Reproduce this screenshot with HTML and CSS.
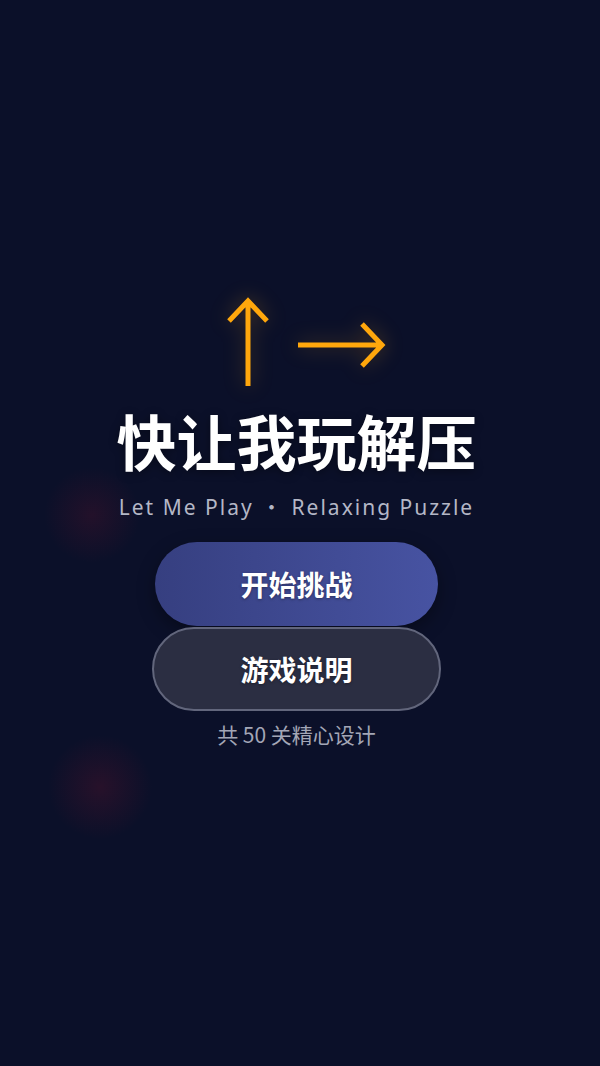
FILE: index.html
```html
<!DOCTYPE html>
<html lang="zh-CN">
  <head>
    <meta charset="utf-8" />
    <meta name="viewport" content="width=device-width, initial-scale=1.0" />
    <link rel="stylesheet" href="styles.css">
  </head>
  <body>
    <main class="menu">
      <div class="logo-arrows">
        <svg class="arrow-up" width="46" height="92" viewBox="0 0 46 92">
          <path d="M23 90 V5 M4 25 L23 5 L42 25" />
        </svg>
        <svg class="arrow-right" width="92" height="50" viewBox="0 0 92 50">
          <path d="M2 25 H86 M66 4 L86 25 L66 46" />
        </svg>
      </div>

      <h1 class="title">快让我玩解压</h1>
      <p class="subtitle">Let Me Play ・ Relaxing Puzzle</p>

      <div class="actions">
        <button class="btn btn-start">开始挑战</button>
        <button class="btn btn-help">游戏说明</button>
      </div>

      <p class="level-count">共 50 关精心设计</p>
    </main>
  </body>
</html>
```

FILE: styles.css
```css
html,
body {
  margin: 0;
  height: 100%;
}
body {
  font-family: "Noto Sans", "Noto Sans CJK SC", sans-serif;
  color: #fff;
  background:
    radial-gradient(circle at 92px 515px, rgba(120, 20, 45, 0.22), rgba(120, 20, 45, 0) 48px),
    radial-gradient(circle at 100px 787px, rgba(120, 20, 45, 0.26), rgba(120, 20, 45, 0) 52px),
    #0b1029;
  overflow: hidden;
}
.menu {
  display: flex;
  flex-direction: column;
  align-items: center;
  padding-top: 296px;
  padding-right: 7px;
}
.logo-arrows {
  display: flex;
  align-items: center;
  gap: 25px;
  margin-left: 19px;
}
.logo-arrows svg {
  display: block;
  overflow: visible;
  filter: drop-shadow(0 0 10px rgba(255, 170, 20, 0.3));
}
.logo-arrows path {
  fill: none;
  stroke: #ffa70c;
  stroke-width: 5;
  stroke-linecap: butt;
  stroke-linejoin: miter;
}
.arrow-right {
  margin-top: 6px;
}
.title {
  margin: 16px 0 0;
  font-family: "Noto Sans CJK SC", sans-serif;
  font-size: 60px;
  font-weight: 700;
  line-height: 72px;
  text-shadow: 0 2px 10px rgba(0, 0, 0, 0.4);
}
.subtitle {
  margin: 17px 0 0;
  font-family: "Noto Sans", "Noto Sans CJK SC", sans-serif;
  font-size: 21px;
  line-height: 28px;
  letter-spacing: 2px;
  color: #b4b7c6;
}
.actions {
  display: flex;
  flex-direction: column;
  align-items: center;
  gap: 1px;
  margin-top: 21px;
}
.btn {
  font-family: "Noto Sans CJK SC", sans-serif;
  font-size: 28px;
  font-weight: 700;
  color: #fff;
  height: 84px;
  border-radius: 42px;
  cursor: pointer;
  text-shadow: 0 1px 3px rgba(0, 0, 0, 0.35);
}
.btn-start {
  width: 283px;
  border: none;
  background: linear-gradient(90deg, #363f80, #4753a2);
  box-shadow: 0 6px 18px rgba(0, 0, 0, 0.35);
}
.btn-help {
  width: 289px;
  border: 2px solid #62667c;
  background: #2b2e42;
}
.level-count {
  margin: 9px 0 0;
  font-family: "Noto Sans CJK SC", sans-serif;
  font-size: 21px;
  line-height: 28px;
  color: #a3a6b6;
}
```
